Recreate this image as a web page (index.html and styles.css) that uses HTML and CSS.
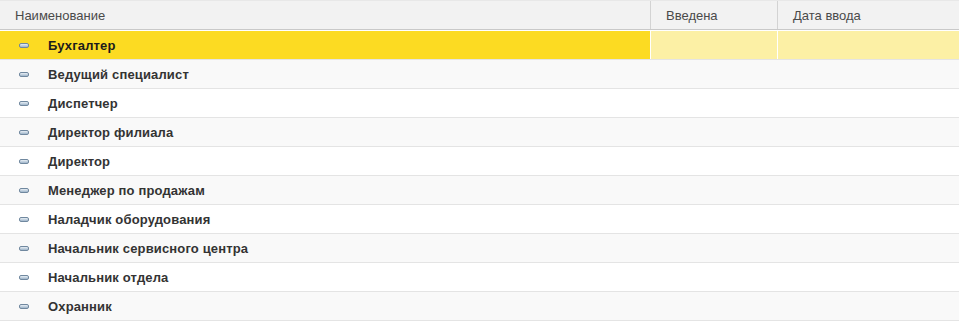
FILE: index.html
```html
<!DOCTYPE html>
<html lang="ru">
<head>
<meta charset="utf-8">
<link rel="stylesheet" href="styles.css">
</head>
<body>
<div class="grid">
  <div class="row head">
    <div class="cell c1">Наименование</div>
    <div class="cell c2">Введена</div>
    <div class="cell c3">Дата ввода</div>
  </div>
  <div class="row sel">
    <div class="cell c1"><span class="ico"></span><span class="name">Бухгалтер</span></div>
    <div class="cell c2"></div>
    <div class="cell c3"></div>
  </div>
  <div class="row alt">
    <div class="cell c1"><span class="ico"></span><span class="name">Ведущий специалист</span></div>
    <div class="cell c2"></div>
    <div class="cell c3"></div>
  </div>
  <div class="row">
    <div class="cell c1"><span class="ico"></span><span class="name">Диспетчер</span></div>
    <div class="cell c2"></div>
    <div class="cell c3"></div>
  </div>
  <div class="row alt">
    <div class="cell c1"><span class="ico"></span><span class="name">Директор филиала</span></div>
    <div class="cell c2"></div>
    <div class="cell c3"></div>
  </div>
  <div class="row">
    <div class="cell c1"><span class="ico"></span><span class="name">Директор</span></div>
    <div class="cell c2"></div>
    <div class="cell c3"></div>
  </div>
  <div class="row alt">
    <div class="cell c1"><span class="ico"></span><span class="name">Менеджер по продажам</span></div>
    <div class="cell c2"></div>
    <div class="cell c3"></div>
  </div>
  <div class="row">
    <div class="cell c1"><span class="ico"></span><span class="name">Наладчик оборудования</span></div>
    <div class="cell c2"></div>
    <div class="cell c3"></div>
  </div>
  <div class="row alt">
    <div class="cell c1"><span class="ico"></span><span class="name">Начальник сервисного центра</span></div>
    <div class="cell c2"></div>
    <div class="cell c3"></div>
  </div>
  <div class="row">
    <div class="cell c1"><span class="ico"></span><span class="name">Начальник отдела</span></div>
    <div class="cell c2"></div>
    <div class="cell c3"></div>
  </div>
  <div class="row alt">
    <div class="cell c1"><span class="ico"></span><span class="name">Охранник</span></div>
    <div class="cell c2"></div>
    <div class="cell c3"></div>
  </div>
</div>
</body>
</html>
```
FILE: styles.css
```css
html, body {
  margin: 0;
  padding: 0;
  background: #ffffff;
}
body {
  font-family: "Liberation Sans", Arial, sans-serif;
  font-size: 13px;
  color: #333333;
}
.grid {
  width: 959px;
  display: flex;
  flex-direction: column;
}
.row {
  display: grid;
  grid-template-columns: 650px 127px 1fr;
  height: 28px;
  border-bottom: 1px solid #e4e4e4;
  background: #ffffff;
}
.row.alt {
  background: #f9f9f9;
}
.cell {
  display: flex;
  align-items: center;
  padding-left: 15px;
  min-width: 0;
  background-clip: padding-box;
}
.c2, .c3 {
  border-left: 1px solid transparent;
}
.row.head {
  height: 28px;
  background: #f2f2f2;
  border-top: 1px solid #e8e8e8;
  border-bottom: 1px solid #c9c9c9;
  box-shadow: 0 1px 0 #ffffff;
  margin-bottom: 1px;
  color: #4a4a4a;
}
.row.head .cell {
  padding-top: 1px;
}
.row.head .c2, .row.head .c3 {
  border-left: 1px solid #d3d3d3;
}
.row.sel .c1 {
  background: #fcdb22;
}
.row.sel .c2, .row.sel .c3 {
  background: #fcf0a5;
  border-left-color: #ffffff;
}
.row.sel .name {
  color: #1c1c1c;
}
.ico {
  width: 8px;
  height: 3px;
  margin-left: 4px;
  border: 1px solid #70889f;
  border-radius: 2px;
  background: linear-gradient(#e8eff5, #9fb5ca);
  flex: none;
}
.name {
  margin-left: 19px;
  font-weight: bold;
  letter-spacing: 0.15px;
  color: #333333;
  white-space: nowrap;
}
```
